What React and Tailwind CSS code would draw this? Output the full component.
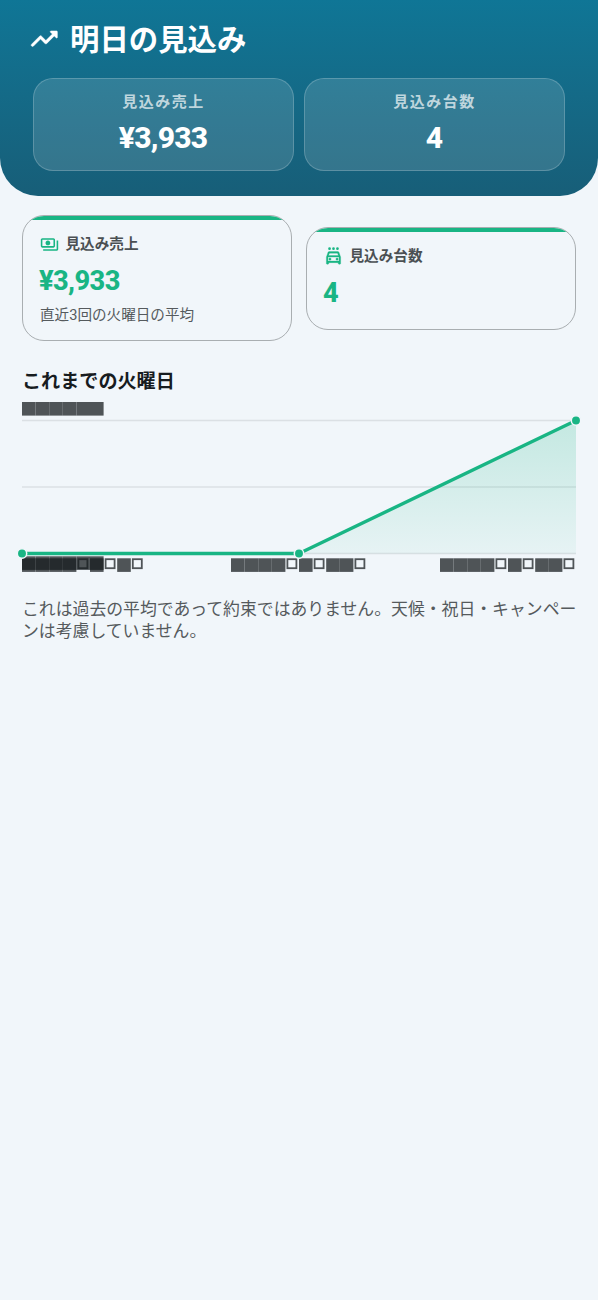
import { MdOutlinePayments } from 'react-icons/md';

const GLYPH = 13.6;

const history = [
    { x: 0, y: 142.5 },
    { x: 277, y: 142.5 },
    { x: 554, y: 9.5 }
];

// '#' is a filled glyph box, 'o' is a hollow one
const axisLabels = [
    { x: 0, y: 145.3, glyphs: '######' },
    { x: 0, y: 147.3, glyphs: '####o#o#o' },
    { x: 209, y: 147.3, glyphs: '####o#o##o' },
    { x: 418, y: 147.3, glyphs: '####o#o##o' }
];

const TrendIcon = () => (
    <svg viewBox="0 0 24 24" className="size-8 shrink-0 stroke-white stroke-[0.4]" fill="currentColor">
        <path d="M16.85 6.85l1.44 1.44-4.88 4.88-3.29-3.29c-.39-.39-1.02-.39-1.41 0l-6 6.01c-.39.39-.39 1.02 0 1.41.39.39 1.02.39 1.41 0L9.41 12l3.29 3.29c.39.39 1.02.39 1.41 0l5.59-5.58 1.44 1.44c.31.31.85.09.85-.35V6.5c.01-.28-.21-.5-.49-.5h-4.29c-.45 0-.67.54-.36.85z" />
    </svg>
);

const CarWashIcon = ({ className }) => (
    <svg viewBox="0 0 24 24" className={className} fill="currentColor">
        <circle cx="7" cy="3.4" r="1.7" />
        <circle cx="12" cy="3.4" r="1.7" />
        <circle cx="17" cy="3.4" r="1.7" />
        <g transform="translate(0 2)" stroke="currentColor" strokeWidth="0.4">
            <path d="M18.92 6.01C18.72 5.42 18.16 5 17.5 5h-11c-.66 0-1.21.42-1.42 1.01L3 12v8c0 .55.45 1 1 1h1c.55 0 1-.45 1-1v-1h12v1c0 .55.45 1 1 1h1c.55 0 1-.45 1-1v-8l-2.08-5.99zM6.85 7h10.29l1.04 3H5.81l1.04-3zM19 17H5v-5h14v5z" />
            <circle cx="7.5" cy="14.5" r="1.5" />
            <circle cx="16.5" cy="14.5" r="1.5" />
        </g>
    </svg>
);

const HeaderStat = ({ label, value }) => (
    <div className="flex h-[93px] flex-1 flex-col items-center rounded-[20px] border border-white/20 bg-white/[0.13] pt-[11px]">
        <div className="text-[15px] leading-[25px] font-bold tracking-[1.5px] text-white/70">{label}</div>
        <div className="mt-[5px] mr-px text-[30px] leading-9 font-extrabold tracking-[-0.8px]">{value}</div>
    </div>
);

const ForecastCard = ({ icon: Icon, label, value, note, className }) => (
    <div className={`relative w-[270px] overflow-hidden rounded-[22px] border border-[#a9aeb1] px-[17px] ${className}`}>
        <div className="absolute inset-x-0 top-0 h-1 bg-[#19b584]" />
        <div className="mt-[18px] flex h-5 items-center gap-[6.5px]">
            <Icon className="size-[19px] text-[#19b584]" />
            <span className="text-[14.6px] leading-5 font-bold text-[#4b5053]">{label}</span>
        </div>
        <div className="mt-[11px] -ml-px text-[27.2px] leading-8 font-extrabold tracking-[-0.6px] text-[#19b584]">{value}</div>
        {note && <div className="mt-2 text-[14.6px] leading-5 text-[#555a5d]">{note}</div>}
    </div>
);

const GlyphRun = ({ x, y, glyphs }) => (
    <g transform={`translate(${x} ${y})`} className="fill-[#171c1f] stroke-[#171c1f]" opacity="0.74">
        {glyphs.split('').map((g, i) =>
            g === '#' ? (
                <rect key={i} x={i * GLYPH} y="0" width={GLYPH} height="13.6" stroke="none" />
            ) : (
                <rect key={i} x={i * GLYPH + 2} y="0.9" width="9" height="9" className="fill-none" strokeWidth="1.8" />
            )
        )}
    </g>
);

const HistoryChart = () => (
    <svg viewBox="0 0 554 163" className="block h-[163px] w-[554px] overflow-visible">
        <defs>
            <linearGradient id="area" x1="0" y1="0" x2="0" y2="1">
                <stop offset="0" stopColor="#19b584" stopOpacity="0.21" />
                <stop offset="1" stopColor="#19b584" stopOpacity="0.05" />
            </linearGradient>
        </defs>
        {[9.5, 76, 142.5].map((y) => (
            <line key={y} x1="0" x2="554" y1={y} y2={y} stroke="#dbe0e4" strokeWidth="1.3" />
        ))}
        <path d="M0 142.5 H277 L554 9.5 V142.5 Z" fill="url(#area)" />
        {axisLabels.map((l, i) => (
            <GlyphRun key={i} {...l} />
        ))}
        <polyline
            points={history.map((p) => `${p.x},${p.y}`).join(' ')}
            fill="none"
            stroke="#19b584"
            strokeWidth="3.4"
            strokeLinejoin="round"
        />
        {history.map((p) => (
            <circle key={p.x} cx={p.x} cy={p.y} r="4.7" fill="#19b584" stroke="#f1f6fa" strokeWidth="1.5" />
        ))}
    </svg>
);

const App = () => {
    return (
        <div className="min-h-[1300px] w-[598px] overflow-hidden bg-[#f1f6fa] font-['Roboto','Noto_Sans_CJK_JP',sans-serif]" lang="ja">
            <header className="h-[196px] rounded-b-[38px] bg-linear-to-b from-[#0f7696] to-[#175e78] text-white">
                <div className="flex h-[78px] items-center gap-[10px] pl-7">
                    <TrendIcon />
                    <h1 className="mt-[2px] text-[29.4px] leading-9 font-bold">明日の見込み</h1>
                </div>
                <div className="flex gap-[10px] px-[33px]">
                    <HeaderStat label="見込み売上" value="¥3,933" />
                    <HeaderStat label="見込み台数" value="4" />
                </div>
            </header>

            <main className="px-[22px] pt-[18.5px]">
                <div className="flex h-[127px] items-center justify-between">
                    <ForecastCard
                        icon={MdOutlinePayments}
                        label="見込み売上"
                        value="¥3,933"
                        note="直近3回の火曜日の平均"
                        className="h-[126px]"
                    />
                    <ForecastCard icon={CarWashIcon} label="見込み台数" value="4" className="h-[103px]" />
                </div>

                <h2 className="mt-[26px] text-[19.1px] leading-7 font-bold text-[#171c1f]">これまでの火曜日</h2>
                <svg viewBox="0 0 554 16" className="mt-[6px] mb-[-7px] block h-4 w-[554px]">
                    <GlyphRun x={0} y={0} glyphs="######" />
                </svg>
                <HistoryChart />

                <p className="mt-6 text-[16.85px] leading-[22.4px] whitespace-nowrap text-[#555a5d]">
                    これは過去の平均であって約束ではありません。天候・祝日・キャンペー
                    <br />
                    ンは考慮していません。
                </p>
            </main>
        </div>
    );
};

export default App;
